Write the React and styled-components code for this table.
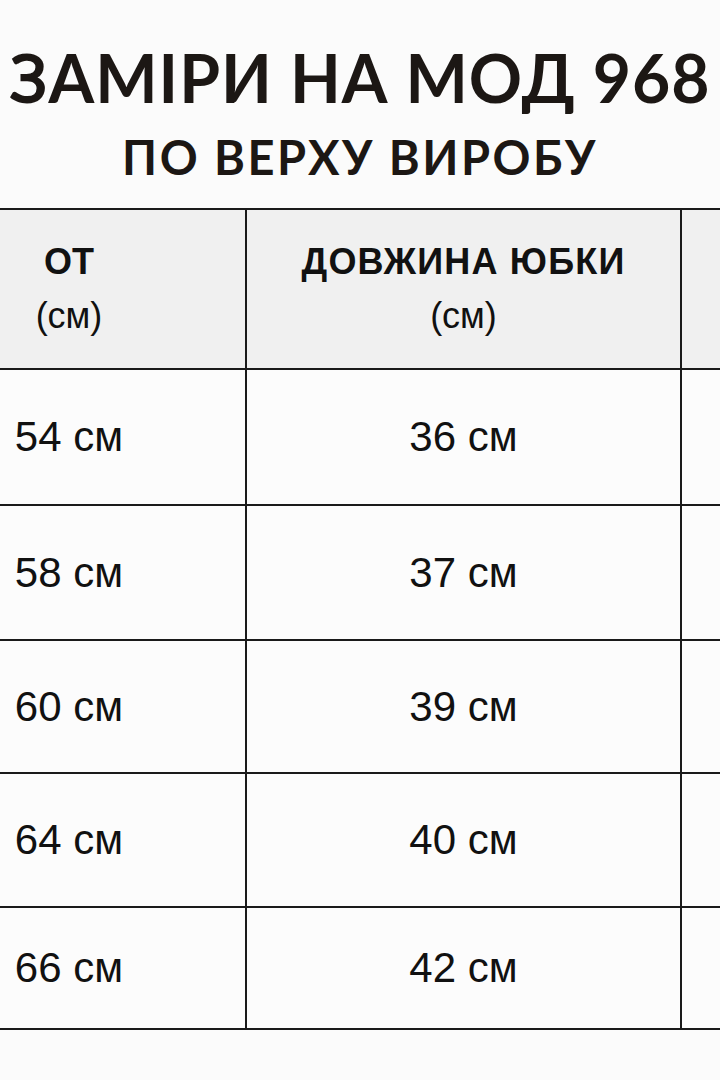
import React from 'react';
import styled, { createGlobalStyle } from 'styled-components';

const GlobalStyle = createGlobalStyle`
  html, body {
    margin: 0;
    padding: 0;
    background: #fbfbfb;
  }
`;

const Page = styled.div`
  width: 720px;
  height: 1080px;
  overflow: hidden;
  background: #fbfbfb;
  color: #1c1714;
`;

const Heading = styled.header`
  display: flex;
  flex-direction: column;
  align-items: center;
  padding-top: 38px;
  height: 208px;
  box-sizing: border-box;
`;

const Title = styled.h1`
  margin: 0;
  font-family: Lato, "Noto Sans", sans-serif;
  font-weight: 700;
  font-size: 66px;
  line-height: 80px;
  white-space: nowrap;
  letter-spacing: 1px;
`;

const Subtitle = styled.h2`
  margin: 11px 0 0;
  font-family: Lato, "Noto Sans", sans-serif;
  font-weight: 700;
  font-size: 47px;
  line-height: 56px;
  white-space: nowrap;
  letter-spacing: 2.5px;
`;

const Table = styled.div`
  display: grid;
  grid-template-columns: 354px 435px 300px;
  margin-left: -107px;
  width: 1089px;
  border-top: 2px solid #1a1a1a;
`;

const Cell = styled.div`
  display: flex;
  flex-direction: column;
  align-items: center;
  justify-content: center;
  height: ${(p) => p.$h}px;
  box-sizing: border-box;
  border-right: 2px solid #1a1a1a;
  border-bottom: 2px solid #1a1a1a;
  background: ${(p) => (p.$head ? '#f0f0f0' : '#fcfcfc')};
  font-family: "Liberation Sans", Arial, sans-serif;
  color: #111;
`;

const HeadLabel = styled.span`
  font-family: "Liberation Sans", Arial, sans-serif;
  font-weight: ${(p) => (p.$strong ? 700 : 600)};
  font-size: 36px;
  line-height: 44px;
  letter-spacing: ${(p) => (p.$strong ? 0 : 1.2)}px;
`;

const Unit = styled.span`
  font-family: "Liberation Sans", Arial, sans-serif;
  font-weight: 400;
  font-size: 36px;
  line-height: 44px;
  margin-top: 10px;
`;

const Value = styled.span`
  font-size: 42px;
  line-height: 48px;
`;

const rows = [
  { waist: '54 см', length: '36 см', h: 136 },
  { waist: '58 см', length: '37 см', h: 135 },
  { waist: '60 см', length: '39 см', h: 133 },
  { waist: '64 см', length: '40 см', h: 134 },
  { waist: '66 см', length: '42 см', h: 122 },
];

const App = () => (
  <Page>
    <GlobalStyle />
    <Heading>
      <Title>ЗАМІРИ НА МОД 968</Title>
      <Subtitle>ПО ВЕРХУ ВИРОБУ</Subtitle>
    </Heading>
    <Table>
      <Cell $head $h={160}>
        <HeadLabel $strong>ОТ</HeadLabel>
        <Unit>(см)</Unit>
      </Cell>
      <Cell $head $h={160}>
        <HeadLabel>ДОВЖИНА ЮБКИ</HeadLabel>
        <Unit>(см)</Unit>
      </Cell>
      <Cell $head $h={160} />
      {rows.map((r) => (
        <React.Fragment key={r.waist}>
          <Cell $h={r.h}><Value>{r.waist}</Value></Cell>
          <Cell $h={r.h}><Value>{r.length}</Value></Cell>
          <Cell $h={r.h} />
        </React.Fragment>
      ))}
    </Table>
  </Page>
);

export default App;
